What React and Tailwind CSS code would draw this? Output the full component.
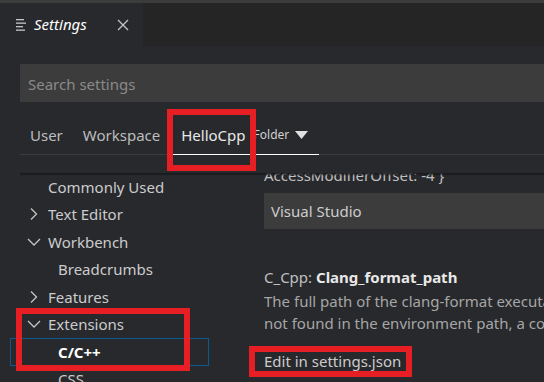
import React from "react";

const Chevron = ({ open }) => (
  <svg width="20" height="20" viewBox="0 0 20 20" className="shrink-0">
    {open ? (
      <polyline points="2,7 8,13 14,7" fill="none" stroke="#c5c5c5" strokeWidth="1.3" />
    ) : (
      <polyline points="5,4.5 10.5,10 5,15.5" fill="none" stroke="#c5c5c5" strokeWidth="1.3" />
    )}
  </svg>
);

const TreeRow = ({ label, chevron, open, indent, selected, bold }) => {
  if (selected) {
    return (
      <div className="h-[27.5px] ml-[10px] w-[199px] border border-[#0e5a8e] flex items-center pl-[47px]">
        <span className={bold ? "font-bold text-[#ffffff]" : ""}>{label}</span>
      </div>
    );
  }
  return (
    <div className="h-[27.5px] flex items-center">
      {indent ? (
        <div className="pl-[58px]">{label}</div>
      ) : (
        <div className="flex items-center pl-[26px]">
          <div className="w-[22px] flex items-center">{chevron ? <Chevron open={open} /> : null}</div>
          <span>{label}</span>
        </div>
      )}
    </div>
  );
};

export default function App() {
  return (
    <div
      className="relative w-[544px] h-[382px] overflow-hidden bg-[#28292c] text-[#cccccc] flex flex-col"
      style={{ fontFamily: '"Noto Sans", "Open Sans", sans-serif' }}
    >
      <div className="h-[3px] bg-[#3c3c3c] shrink-0" />
      <div className="h-[43px] flex bg-[#252526] shrink-0">
        <div className="w-[143px] bg-[#28292c] flex items-center pl-[16px]">
          <svg width="10" height="12" viewBox="0 0 10 12" className="shrink-0">
            <rect x="0" y="0" width="8" height="1.3" fill="#c5c5c5" />
            <rect x="0" y="3.5" width="10" height="1.3" fill="#c5c5c5" />
            <rect x="0" y="7" width="7" height="1.3" fill="#c5c5c5" />
            <rect x="0" y="10.5" width="9" height="1.3" fill="#c5c5c5" />
          </svg>
          <span className="ml-[8px] italic text-[15px] text-white leading-none">Settings</span>
          <svg width="12" height="12" viewBox="0 0 12 12" className="ml-auto mr-[14px]">
            <path d="M1 1 L11 11 M11 1 L1 11" stroke="#c5c5c5" strokeWidth="1.3" />
          </svg>
        </div>
      </div>

      <div className="ml-[20px] mt-[18px] h-[38px] bg-[#3c3c3c] flex items-center pl-[8px] pt-[3px] shrink-0">
        <span className="text-[15px] text-[#8a8a8a]">Search settings</span>
      </div>

      <div className="ml-[20px] h-[53px] border-b border-[#3c3c3c] flex items-stretch shrink-0 text-[15px]">
        <div className="ml-[10px] flex items-center pt-[14px] text-[#bdbdbd]">User</div>
        <div className="ml-[20px] flex items-center pt-[14px] text-[#bdbdbd]">Workspace</div>
        <div className="ml-[12px] pl-[9px] pr-[11px] flex items-center pt-[14px] border-b border-white -mb-px">
          <span className="text-[#e8e8e8]">HelloCpp</span>
          <span className="ml-[8px] text-[12px] text-[#d0d0d0]">Folder</span>
          <svg width="13" height="8" viewBox="0 0 13 8" className="ml-[6px]">
            <polygon points="0,0 13,0 6.5,8" fill="#e0e0e0" />
          </svg>
        </div>
      </div>

      <div className="h-[18px] shrink-0" />

      <div className="relative flex-1 flex overflow-hidden text-[15px]">
        <div className="w-[210px] shrink-0">
          <TreeRow label="Commonly Used" />
          <TreeRow label="Text Editor" chevron />
          <TreeRow label="Workbench" chevron open />
          <TreeRow label="Breadcrumbs" indent />
          <TreeRow label="Features" chevron />
          <TreeRow label="Extensions" chevron open />
          <TreeRow label="C/C++" selected bold />
          <TreeRow label="CSS" indent />
        </div>
        <div className="flex-1 min-w-0 pl-[54px]">
          <div className="-mt-[8px] leading-[20px] whitespace-nowrap text-[#c0c0c0]">AccessModifierOffset: -4 }</div>
          <div className="mt-[8px] h-[36px] bg-[#3c3c3c] flex items-center pl-[7px] text-[#cccccc]">Visual Studio</div>
          <div className="mt-[38px] leading-[20px] whitespace-nowrap">
            <span className="text-[#c0c0c0]">C_Cpp: </span>
            <span className="font-bold text-[#e8e8e8]">Clang_format_path</span>
          </div>
          <div className="mt-[4px] leading-[21.6px] whitespace-nowrap text-[#a6a6a6]">
            <div>The full path of the clang-format executable. If not specified, and clang-format is available in the environment path, that is used. If</div>
            <div>not found in the environment path, a copy of clang-format bundled with the extension will be used.</div>
          </div>
          <div className="mt-[17px] leading-[20px] whitespace-nowrap text-[#cccccc]">Edit in settings.json</div>
        </div>
        <div className="absolute left-[20px] right-0 top-0 h-[3px] bg-gradient-to-b from-[#151618] to-transparent" />
      </div>

      <div className="absolute left-[167px] top-[109px] w-[89px] h-[62px] border-[6px] border-[#e81e25]" />
      <div className="absolute left-[16px] top-[308px] w-[174px] h-[63px] border-[6px] border-[#e81e25]" />
      <div className="absolute left-[249px] top-[346px] w-[163px] h-[31px] border-[6px] border-[#e81e25]" />
    </div>
  );
}
